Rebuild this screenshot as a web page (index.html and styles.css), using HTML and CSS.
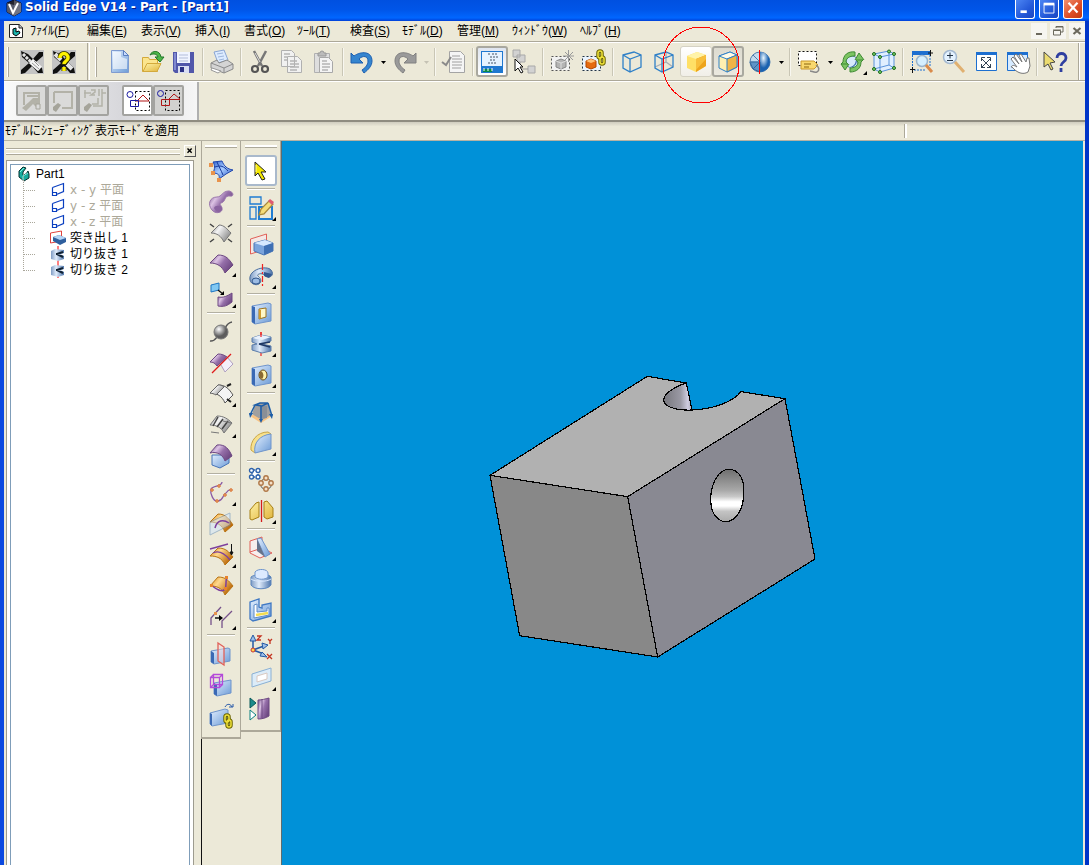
FILE: index.html
```
<!DOCTYPE html>
<html lang="ja">
<head>
<meta charset="utf-8">
<title>Solid Edge V14 - Part - [Part1]</title>
<link rel="stylesheet" href="styles.css">
</head>
<body>
<svg class="defs" aria-hidden="true">
  <defs>
    <linearGradient id="blue" x1="0" y1="0" x2="1" y2="1"><stop offset="0" stop-color="#e4f0ff"/><stop offset="1" stop-color="#6c9bd6"/></linearGradient>
    <linearGradient id="deep" x1="0" y1="0" x2="1" y2="1"><stop offset="0" stop-color="#2f62d0"/><stop offset=".45" stop-color="#a9ccff"/><stop offset="1" stop-color="#1d4fc0"/></linearGradient>
    <linearGradient id="steel" x1="0" y1="0" x2="1" y2="0"><stop offset="0" stop-color="#7f9cc4"/><stop offset=".4" stop-color="#e0ecfb"/><stop offset="1" stop-color="#4f77ad"/></linearGradient>
    <linearGradient id="purple" x1="0" y1="0" x2="1" y2=".6"><stop offset="0" stop-color="#6b4a80"/><stop offset=".35" stop-color="#dcc2e4"/><stop offset=".6" stop-color="#9670aa"/><stop offset="1" stop-color="#6d4882"/></linearGradient>
    <linearGradient id="gold" x1="0" y1="0" x2="1" y2="1"><stop offset="0" stop-color="#fff3a8"/><stop offset="1" stop-color="#e0b43c"/></linearGradient>
    <linearGradient id="orange" x1="0" y1="0" x2="1" y2=".6"><stop offset="0" stop-color="#d98412"/><stop offset=".4" stop-color="#ffd98e"/><stop offset="1" stop-color="#b96200"/></linearGradient>
    <linearGradient id="gray" x1="0" y1="0" x2="1" y2=".6"><stop offset="0" stop-color="#8c8c8c"/><stop offset=".4" stop-color="#f4f4f4"/><stop offset="1" stop-color="#8c8c8c"/></linearGradient>
    <radialGradient id="ball" cx=".35" cy=".3"><stop offset="0" stop-color="#fff"/><stop offset="1" stop-color="#5d5d5d"/></radialGradient>
    <radialGradient id="orb" cx=".35" cy=".3"><stop offset="0" stop-color="#e8f6ff"/><stop offset="1" stop-color="#1a62b0"/></radialGradient>
    <linearGradient id="bore" x1="0" y1="0" x2="0" y2="1"><stop offset="0" stop-color="#6f6f6f"/><stop offset=".4" stop-color="#a8a8a8"/><stop offset=".52" stop-color="#c8c8c8"/><stop offset=".62" stop-color="#fff"/><stop offset=".7" stop-color="#fff"/><stop offset=".8" stop-color="#c4c4c4"/><stop offset="1" stop-color="#aaa"/></linearGradient>
    <linearGradient id="wall" x1="0" y1="0" x2="1" y2="0"><stop offset="0" stop-color="#77777d"/><stop offset=".6" stop-color="#9a99a4"/><stop offset=".85" stop-color="#cfcde0"/><stop offset="1" stop-color="#aaa9b8"/></linearGradient>
  </defs>
</svg>

<div class="window">
  <header class="titlebar">
    <svg class="applogo" viewBox="0 0 16 16"><path d="M8 0l7 3v9l-7 4-7-4V3z" fill="#23232e" stroke="#0a1030"/><path d="M8 0l7 3v9l-7 4z" fill="#555560"/><path d="M1 3l7 2 7-2v9l-7 4-7-4z" fill="#8b93a8" opacity=".5"/><path d="M3 4l4 9 5-10" fill="none" stroke="#fff" stroke-width="2"/></svg>
    <h1>Solid Edge V14 - Part - [Part1]</h1>
    <div class="winbtns">
      <button aria-label="最小化"><svg viewBox="0 0 20 20"><path d="M5 13h7" stroke="#fff" stroke-width="3"/></svg></button>
      <button aria-label="最大化"><svg viewBox="0 0 20 20"><path d="M4.500 5h11v9.500h-11z" fill="none" stroke="#fff"/><path d="M4 4.500h12" stroke="#fff" stroke-width="3"/></svg></button>
      <button class="close" aria-label="閉じる"><svg viewBox="0 0 20 20"><path d="M5 3l10 11M15 3L5 14" stroke="#fff" stroke-width="2.400"/></svg></button>
    </div>
  </header>

  <nav class="menubar">
    <svg class="docicon" viewBox="0 0 14 16"><path d="M.5 1.500h10l3 3v10H.5z" fill="#fff" stroke="#222"/><path d="M10 1v4h4" fill="#bbb" stroke="#222"/><path d="M4 6l3-1v4l3-1 1 2-4 3-3-2z" fill="#1bb5ad" stroke="#000"/></svg>
    <div class="menus">
      <button>ﾌｧｲﾙ(<u>F</u>)</button><button>編集(<u>E</u>)</button><button>表示(<u>V</u>)</button><button>挿入(<u>I</u>)</button><button>書式(<u>O</u>)</button><button>ﾂｰﾙ(<u>T</u>)</button><button>検査(<u>S</u>)</button><button>ﾓﾃﾞﾙ(<u>D</u>)</button><button>管理(<u>M</u>)</button><button>ｳｨﾝﾄﾞｳ(<u>W</u>)</button><button>ﾍﾙﾌﾟ(<u>H</u>)</button>
    </div>
    <div class="docbtns">
      <button aria-label="文書の最小化"><svg viewBox="0 0 16 16"><path d="M5 11h6" stroke="#6b685c" stroke-width="2"/></svg></button>
      <button aria-label="文書を元に戻す"><svg viewBox="0 0 16 16"><path d="M6 5V3.500h7V9h-2M6 4h7M3.500 7.500h7V12h-7zM3 7h8" fill="none" stroke="#6b685c"/></svg></button>
      <button aria-label="文書を閉じる"><svg viewBox="0 0 16 16"><path d="M4.500 5l7 6M11.500 5l-7 6" stroke="#6b685c" stroke-width="2.200"/></svg></button>
    </div>
  </nav>

  <div class="toolrow">
    <div class="tools addins">
      <i class="grip"></i>
      <button aria-label="アドイン"><svg viewBox="0 0 24 24"><path d="M0 0h24v24H0z" fill="#c4c4c4"/><path d="M1 1l7 3 5 5 6-7h4v4l-7 6 6 6 1 5h-5l-6-7-7 7-4 1v-4l8-7-7-6z" fill="#111"/><path d="M3 4l9 9" stroke="#e4e4e4" stroke-width="3" stroke-dasharray="3 1"/><path d="M11 11l9 8" stroke="#f4f4f4" stroke-width="6"/><path d="M12 13l7 6M14 11l5 5" stroke="#999"/></svg></button>
      <button aria-label="アドイン ヘルプ"><svg viewBox="0 0 24 24"><path d="M0 0h24v24H0z" fill="#c4c4c4"/><path d="M1 1l7 3 5 5 6-7h4v4l-7 6 6 6 1 5h-5l-6-7-7 7-4 1v-4l8-7-7-6z" fill="#111"/><path d="M3 4l6 6M15 14l5 5" stroke="#e4e4e4" stroke-width="4"/><path d="M8 8c0-6 8-6 8 0 0 3-4 3-4 7M12 17v4" fill="none" stroke="#333300" stroke-width="5"/><path d="M8 8c0-6 8-6 8 0 0 3-4 3-4 6M12 17v4" fill="none" stroke="#fff200" stroke-width="3.400"/></svg></button>
    </div>
    <div class="tools main">
      <i class="grip"></i>
      <button aria-label="新規"><svg viewBox="0 0 24 24"><path d="M3.500 .5h12l5 5v17h-17z" fill="url(#blue)" stroke="#7f9bd0"/><path d="M5 2h8v5l6 2v10H5z" fill="#fff" opacity=".6"/><path d="M15.500 .5v5h5z" fill="#c9dcff" stroke="#5b7fc0"/></svg></button>
      <button aria-label="開く"><svg viewBox="0 0 24 24"><path d="M2.500 7.500h6l1 2h8v12h-15z" fill="#fbe58e" stroke="#d3a93c"/><path d="M3 21.500l4-8h14l-4 8z" fill="url(#gold)" stroke="#d3a93c"/><path d="M10 5c2-5 10-5 11 2h3l-4 5-5-5h3c-1-3-4-4-8-2z" fill="#4db648" stroke="#22772a"/></svg></button>
      <button aria-label="保存"><svg viewBox="0 0 24 24"><path d="M1 2h21v21H3l-2-2z" fill="#5157aa"/><path d="M2 3h2v17H2z" fill="#8089d0"/><path d="M5 2h13v11H5z" fill="#f0f4ff"/><path d="M7 5h9M7 8h9M7 11h9" stroke="#b3bdd8"/><path d="M6 16h11v7H6z" fill="#d8ddf2"/><path d="M8 17h4v5H8z" fill="#2c3184"/></svg></button>
      <i class="sep"></i>
      <button aria-label="印刷"><svg viewBox="0 0 24 24"><path d="M4 2l10-2 4 10-10 3z" fill="#dcebff" stroke="#8aa6d4"/><path d="M7 4l6-1M8 7l6-1M9 10l5-1" stroke="#9db6dc"/><path d="M1 13l6-3 2 3 8-3 6 4v5l-9 4-13-5z" fill="#d4d4d4" stroke="#8a8a8a"/><path d="M1 13l13 5 9-4M14 18v5" fill="none" stroke="#8a8a8a"/><path d="M2 18l9 3-3 2-7-3z" fill="#fff" stroke="#999"/></svg></button>
      <i class="sep"></i>
      <button aria-label="切り取り"><svg viewBox="0 0 24 24"><path d="M6 1l8 15M18 1l-8 15" stroke="#777" stroke-width="2.500"/><path d="M7 3l5 9" stroke="#ddd"/><circle cx="7" cy="19" r="3" fill="none" stroke="#555" stroke-width="2.200"/><circle cx="17" cy="19" r="3" fill="none" stroke="#555" stroke-width="2.200"/></svg></button>
      <button aria-label="コピー"><svg viewBox="0 0 24 24"><path d="M1.500 .5h10l3 3v13h-13zM7.500 6.500h10l4 4v12h-14z" fill="#f1f1f1" stroke="#b0b0b0"/><path d="M4 4h6M4 7h3M4 10h3M10 11h7M10 14h9M10 17h9M10 20h7" stroke="#b4b4b4" stroke-width="1.500"/></svg></button>
      <button aria-label="貼り付け"><svg viewBox="0 0 24 24"><path d="M2.500 3.500h15v19h-15z" fill="#dedede" stroke="#b0b0b0"/><path d="M6 6V3h2a2 2 0 0 1 4 0h2v3z" fill="#bbb" stroke="#999"/><path d="M7.500 7.500h9l4 4v11h-13z" fill="#f4f4f4" stroke="#a8a8a8"/><path d="M10 11h5M10 14h8M10 17h8M10 20h6" stroke="#b4b4b4" stroke-width="1.500"/></svg></button>
      <i class="sep"></i>
      <button aria-label="元に戻す"><svg viewBox="0 0 24 24"><path d="M1 3l3 3C11 1 22 1 22 11c0 5-4 9-8 12l-2-3c3-2 6-5 6-9 0-5-5-6-9-2l4 4H1z" fill="#3585cf" stroke="#1c5fb0"/></svg></button><button class="drop" aria-label="元に戻す一覧"><svg viewBox="0 0 11 31"><path d="M3 15h5l-2.500 3z"/></svg></button>
      <button aria-label="やり直し"><svg viewBox="0 0 24 24"><path d="M23 3l-3 3C13 1 2 1 2 11c0 5 4 9 8 12l2-3c-3-2-6-5-6-9 0-5 5-6 9-2l-4 4h12z" fill="#9a9a9a" stroke="#808080"/></svg></button><button class="drop off" aria-label="やり直し一覧"><svg viewBox="0 0 11 31"><path d="M3 15h5l-2.500 3z"/></svg></button>
      <i class="sep"></i>
      <button aria-label="プロパティ"><svg viewBox="0 0 24 24"><path d="M7.500 1.500h11l4 4v17h-15z" fill="#f5f5f5" stroke="#a4a4a4"/><path d="M10 6h8M10 9h10M10 12h10M10 15h10M10 18h9" stroke="#bcbcbc" stroke-width="1.500"/><path d="M0 12l4 3 5-8" fill="none" stroke="#8a8a8a" stroke-width="2"/></svg></button>
      <i class="sep"></i>
      <button class="pressed" aria-label="EdgeBar"><svg viewBox="0 0 24 24"><path d="M1 1h22v22H1z" fill="#1f78d0"/><path d="M2 2h20v14H2z" fill="#e6f3ff"/><path d="M8 4h2M12 4h6M10 7h2M13 7h5M10 10h2M13 10h3M8 13h8" stroke="#456" stroke-dasharray="2 1"/><path d="M3 19h9v3H3z" fill="#0a8a4a"/><path d="M4 18v3M8 18v3M12 18v3" stroke="#fff"/></svg></button>
      <button aria-label="選択ツール"><svg viewBox="0 0 24 24"><path d="M1 0h7v7H1zM5 5h8v7H5zM16 16h7v7h-7z" fill="#d2d2d2" stroke="#a8a8a8"/><path d="M8 12v7h8" fill="none" stroke="#999"/><path d="M3 9l8 8H8l3 5-2 1-3-5-3 3z" fill="#fff" stroke="#111"/></svg></button>
      <i class="sep"></i>
      <button aria-label="新規コンポーネント"><svg viewBox="0 0 24 24"><path d="M1.500 6.500h18v14h-18z" fill="#f2f2f2" stroke="#555" stroke-dasharray="2 2"/><path d="M6 11l5-2 5 2v6l-5 2-5-2z" fill="#b4b4b4" stroke="#888"/><path d="M6 11l5 2 5-2M11 13v6" fill="none" stroke="#ddd"/><path d="M18.500 0v12M13 6h11M15 2l8 8M23 2l-8 8" stroke="#999"/></svg></button>
      <button aria-label="リンク"><svg viewBox="0 0 24 24"><path d="M.5 6.500h18v14H.5z" fill="#eaf4ff" stroke="#234" stroke-dasharray="2 2"/><path d="M4 11l5-2 5 2v6l-5 2-5-2z" fill="#e56a10" stroke="#b34700"/><path d="M4 11l5 2 5-2-5-2z" fill="#ffc27a"/><g fill="none" stroke="#6b6400" stroke-width="3.500"><rect x="16" y="1" width="4" height="7" rx="2"/><rect x="18" y="7" width="4" height="7" rx="2"/></g><g fill="none" stroke="#f0e23a" stroke-width="1.500"><rect x="16" y="1" width="4" height="7" rx="2"/><rect x="18" y="7" width="4" height="7" rx="2"/></g></svg></button>
      <i class="sep"></i>
      <button aria-label="ワイヤーフレーム"><svg viewBox="0 0 24 24" fill="none" stroke="#2f80c8" stroke-width="1.300"><path d="M3 5l11-3 7 3v12l-11 5-7-4zM3 5l7 4 11-4M10 9v13"/></svg></button>
      <button aria-label="隠線表示"><svg viewBox="0 0 24 24" fill="none" stroke="#2f80c8" stroke-width="1.300"><path d="M3 17l11-5 7 5M14 12V3" stroke="#a5adb8"/><path d="M3 5l11-3 7 3v12l-11 5-7-4zM3 5l7 4 11-4M10 9v13"/></svg></button>
      <span class="spot"><button class="hover" aria-label="シェーディング"><svg viewBox="0 0 24 24"><path d="M3 6l10-4 9 3v11l-10 6-9-4z" fill="#ffe066"/><path d="M3 6l10-4 9 3-10 4z" fill="#fff3a8"/><path d="M12 9l10-4v11l-10 6z" fill="#eda41c"/><path d="M12 9l10-4v4L12 20z" fill="#f8bf3c"/></svg></button><svg class="ring" viewBox="0 0 78 78"><circle cx="39" cy="39" r="38" fill="none" stroke="#f00"/></svg></span>
      <button class="pressed plain" aria-label="エッジ付きシェーディング"><svg viewBox="0 0 24 24" stroke="#2f80c8"><path d="M3 6l11-4 7 3v12l-10 5-8-4z" fill="#fff0b0"/><path d="M3 6l11-4 7 3-10 4z" fill="#fffbe8"/><path d="M11 9l10-4v12l-10 5z" fill="#f0b547"/></svg></button>
      <button aria-label="ビューの設定"><svg viewBox="0 0 24 24"><circle cx="12" cy="12" r="10" fill="#c4daec" stroke="#4f7dae"/><path d="M12 2a10 10 0 0 1 0 20z" fill="url(#orb)"/><path d="M12 12H2l3 7zM12 12L5 19l7 3z" fill="#5f94c6" stroke="#35689c"/><path d="M12 12L5 5M12 12L2 12" stroke="#4f7dae"/><path d="M11.500 0v24" stroke="#f00"/></svg></button><button class="drop" aria-label="ビュー一覧"><svg viewBox="0 0 11 31"><path d="M3 15h5l-2.500 3z"/></svg></button>
      <i class="sep"></i>
      <button aria-label="名前付きビュー"><svg viewBox="0 0 24 24"><path d="M1.500 1.500h18v14h-18z" fill="#fff" stroke="#111" stroke-dasharray="2 2"/><path d="M4 11h13l4 4-4 4H4z" fill="#f9d86d" stroke="#c9982c"/><path d="M7 14h7M7 17h5" stroke="#8a6410"/><path d="M19 15c3 2 4 5 1 7-3 1-5-1-7-1" fill="none" stroke="#888" stroke-width="1.500"/></svg></button><button class="drop" aria-label="名前付きビュー一覧"><svg viewBox="0 0 11 31"><path d="M3 15h5l-2.500 3z"/></svg></button>
      <button class="fly" aria-label="回転"><svg viewBox="0 0 24 24"><circle cx="12" cy="12" r="6" fill="#d6e9fa" stroke="#5580b0"/><path d="M16 8a6 6 0 0 1-6 9c5-1 6-5 6-9z" fill="#3c6fae"/><path d="M1 14l7 0-2-2c0-4 4-6 8-6l1 0 0-4C8 1 3 5 3 12zM1 14l4 6 4-6" fill="#7cc462" stroke="#3f8a34"/><path d="M23 10l-7 0 2 2c0 4-4 6-8 6v4c7 0 11-4 11-10zM15 10l4-7 5 7" fill="#7cc462" stroke="#3f8a34"/></svg></button>
      <button aria-label="フィット"><svg viewBox="0 0 24 24"><path d="M2 4l15-3 5 3v14l-14 4-6-3z" fill="#e0efff" stroke="#5b93db"/><path d="M2 4l6 3 14-3M8 7v16M17 1v14l5 3M17 15L2 19" fill="none" stroke="#5b93db"/><g fill="#7bd06a" stroke="#1c6a1c"><circle cx="2" cy="4" r="1.500"/><circle cx="17" cy="1.500" r="1.500"/><circle cx="22" cy="4" r="1.500"/><circle cx="8" cy="7" r="1.500"/><circle cx="2" cy="19" r="1.500"/><circle cx="8" cy="22" r="1.500"/><circle cx="22" cy="18" r="1.500"/></g></svg></button>
      <i class="sep"></i>
      <button aria-label="領域ズーム"><svg viewBox="0 0 24 24"><path d="M2 1h18v4H2z" fill="#1d6fd0"/><path d="M2.500 5v15M4 20h12M20 5v12" fill="none" stroke="#1d6fd0" stroke-dasharray="2 1"/><path d="M18 3h5M20.500 0v6M0 19.500h5M2.500 17v6" stroke="#111"/><circle cx="12" cy="11" r="5.500" fill="#d5efff" stroke="#9ab4cc" stroke-width="1.500"/><path d="M16 15l6 7" stroke="#d98b4c" stroke-width="3"/></svg></button>
      <button aria-label="ズーム"><svg viewBox="0 0 24 24"><circle cx="8" cy="7" r="6.500" fill="#e4f2ff" stroke="#a3b8d0" stroke-width="1.500"/><path d="M5 5.500h6M8 2.500v6M5 10.500h6" stroke="#234"/><path d="M13 12l9 10" stroke="#e0b070" stroke-width="3"/></svg></button>
      <button aria-label="全体表示"><svg viewBox="0 0 24 24"><path d="M2.500 2.500h20v18h-20z" fill="#fff" stroke="#1d6fd0"/><path d="M2 2h21v3H2z" fill="#1d6fd0"/><path d="M7 8l10 10M17 8L7 18M7.500 11V7.500H11M13 7.500h3.500V11M7.500 14v3.500H11M13 17.500h3.500V14" fill="none" stroke="#345"/></svg></button>
      <button aria-label="パン"><svg viewBox="0 0 24 24"><path d="M1.500 2.500h20v18h-20z" fill="#d7ebff" stroke="#1d6fd0"/><path d="M1 2h21v3H1z" fill="#1d6fd0"/><path d="M5 17c2-3 4-1 6 0L5 9l2-2 6 7-5-8 2-2 6 8-3-7 2-1 5 8 1-4h2l1 8-2 6c-5 3-11 1-16-5z" fill="#fff" stroke="#777"/></svg></button>
      <i class="sep"></i>
      <button aria-label="ヘルプ"><svg viewBox="0 0 24 24"><path d="M0 2l11 10-5 1 3 6-2 1-3-6-4 3z" fill="#ecdc70" stroke="#444"/><path d="M13 8c0-6 9-6 9 0 0 4-5 4-5 8M17 18v4" fill="none" stroke="#2f3fa0" stroke-width="2.800"/></svg></button>
      <i class="tail"></i>
    </div>
  </div>

  <div class="ribbonrow">
    <div class="ribbon">
      <div class="group">
        <button class="dim" aria-label="平面選択"><svg viewBox="0 0 24 24"><path d="M4 16V4h15v12M7 7h12" fill="none" stroke="#b3b2a8" stroke-width="2"/><path d="M9 13l4-4h7v10h-3l-4-4-7 7-4-3z" fill="#b3b2a8"/><path d="M16 15h4v5h-4z" fill="#dadad9" stroke="#a5a49a"/></svg></button>
        <button class="dim" aria-label="プロファイル"><svg viewBox="0 0 24 24"><path d="M3 3h18v16H11M3 3v11" fill="none" stroke="#b3b2a8" stroke-width="2"/><path d="M2 18l5-4 3 2-5 7-3-2z" fill="#a5a49a"/></svg></button>
        <button class="dim" aria-label="範囲"><svg viewBox="0 0 24 24"><path d="M2 4h7M20 4h4M3 1v8M17 0v7M20 0v17h-9M16 9v6h-6M9 1h4v2L9 6h4" fill="none" stroke="#b3b2a8" stroke-width="1.500"/><path d="M2 18l5-4 3 2-5 7-3-2z" fill="#a5a49a"/></svg></button>
      </div>
      <div class="group">
        <button class="sel" aria-label="側面"><svg viewBox="0 0 24 24" fill="none"><path d="M9.500 2.500h14v19h-14z" stroke="#000" stroke-dasharray="2 2"/><path d="M10 12h13M11 12l6-6 6 6" stroke="#b01414"/><circle cx="4" cy="5.500" r="3" stroke="#1a1aa0"/><path d="M4.500 11.500h8v6h-8z" stroke="#1a1aa0"/></svg></button>
        <button class="alt" aria-label="内外"><svg viewBox="0 0 24 24" fill="none"><path d="M8.500 1.500h14v20h-14z" stroke="#000" stroke-dasharray="2 2"/><path d="M12 10.500h11M12 10l5-5 6 5M4.500 10.500h8v6h-8z" stroke="#b01414"/><circle cx="3.500" cy="4.500" r="3" stroke="#1a1aa0"/></svg></button>
      </div>
    </div>
  </div>

  <div class="prompt"><p>ﾓﾃﾞﾙにｼｪｰﾃﾞｨﾝｸﾞ表示ﾓｰﾄﾞを適用</p><span></span></div>

  <main class="work">
    <aside class="edgebar">
      <div class="edgehead"><i></i><button aria-label="パネルを閉じる"><svg viewBox="0 0 12 12"><path d="M3 3l5 5M8 3L3 8" stroke="#000" stroke-width="1.700"/></svg></button></div>
      <div class="treeframe">
        <div class="tree">
          <div class="root"><svg viewBox="0 0 14 16"><path d="M2 5l4-4 3 1-3 4v3l3-1 2-3 1 3v4l-5 3-5-4z" fill="#18a99c" stroke="#053030"/><path d="M3 6l4-4M6 14v-4l5-3" fill="none" stroke="#7ff0e4"/></svg>Part1</div>
          <ul>
            <li class="plane"><svg viewBox="0 0 16 16"><path d="M2.500 5.500l11-4v8l-7 3M2.500 5.500v8h4v-3h-4" fill="none" stroke="#0a3fc0" stroke-width="1.200"/></svg>x - y 平面</li>
            <li class="plane"><svg viewBox="0 0 16 16"><path d="M2.500 5.500l11-4v8l-7 3M2.500 5.500v8h4v-3h-4" fill="none" stroke="#0a3fc0" stroke-width="1.200"/></svg>y - z 平面</li>
            <li class="plane"><svg viewBox="0 0 16 16"><path d="M2.500 5.500l11-4v8l-7 3M2.500 5.500v8h4v-3h-4" fill="none" stroke="#0a3fc0" stroke-width="1.200"/></svg>x - z 平面</li>
            <li><svg viewBox="0 0 16 16"><path d="M.5 3l11-2v10L.5 13z" fill="#fff" stroke="#e0443e"/><path d="M3 7l6-2 7 3v4l-6 3-7-4z" fill="#2f5f9e"/><path d="M3 7l6-2 7 3-6 2z" fill="#b4d4f5"/></svg>突き出し 1</li>
            <li><svg viewBox="0 0 16 16"><path d="M8 0v16" stroke="#f00"/><path d="M1 5l4-2 9 1v3l-4 1 4 2v3l-6 2-7-2z" fill="url(#steel)"/><path d="M7 8l6-2M7 8l6 3M6 8h3" stroke="#123" stroke-width="2"/></svg>切り抜き 1</li>
            <li><svg viewBox="0 0 16 16"><path d="M8 0v16" stroke="#f00"/><path d="M1 5l4-2 9 1v3l-4 1 4 2v3l-6 2-7-2z" fill="url(#steel)"/><path d="M7 8l6-2M7 8l6 3M6 8h3" stroke="#123" stroke-width="2"/></svg>切り抜き 2</li>
          </ul>
        </div>
      </div>
    </aside>

    <div class="railslot first">
      <div class="rail">
        <i class="grip"></i>
        <button aria-label="曲面 境界"><svg viewBox="0 0 24 24"><path d="M4 3l9-1c2 5 5 8 11 9l-7 4-7 5c1-4-1-6-6-6 2-4 2-8 0-11z" fill="url(#deep)" stroke="#1d44ac"/><path d="M6 8c5-2 9-1 13 4M8 3c2 5 4 8 6 13" fill="none" stroke="#16389a"/><g fill="#e8934c"><path d="M0 4h4v4H0zM2 12h4v4H2zM8 19h4v4H8z"/></g></svg></button>
        <button aria-label="スイープ曲面"><svg viewBox="0 0 24 24"><path d="M3 20c-5-6-2-13 5-13 5 0 5-6 12-6 5 1 5 6 1 5-6-1-4 6-9 7-3 1 2 3 1 7-1 3-7 4-10 0z" fill="url(#purple)" stroke="#9a76ac"/><path d="M5 18c1-3 6-3 8 0 0 4-6 5-8 0z" fill="#8a63a0"/></svg></button>
        <button aria-label="オフセット曲面"><svg viewBox="0 0 24 24"><path d="M2 12l8-8c5 0 8 4 12 8l-7 9C12 15 8 12 2 12z" fill="url(#gray)" stroke="#777"/><path d="M1 3l4 3M23 3l-4 3M1 21l4-3M23 21l-4-3" stroke="#444" stroke-width="1.500"/></svg></button>
        <button class="fly" aria-label="押し出し曲面"><svg viewBox="0 0 24 24"><path d="M1 11l8-8c8 0 11 4 15 10l-8 8C13 14 8 11 1 11z" fill="url(#purple)" stroke="#6d4882"/></svg></button>
        <button class="fly" aria-label="曲面コピー"><svg viewBox="0 0 24 24"><path d="M2 2l8-2v7L2 9z" fill="#81c8f2" stroke="#1d76c4"/><path d="M9 7l5 4" stroke="#111" stroke-width="1.500"/><path d="M15 12V8l-4 4z"/><path d="M9 14c6 1 9-1 14-4v9c-5 4-8 5-14 4z" fill="url(#purple)" stroke="#6d4882"/></svg></button>
        <i class="hr"></i>
        <button aria-label="交差点"><svg viewBox="0 0 24 24"><path d="M1 21c6 1 6-5 11-8s4-10 11-11" fill="none" stroke="#555" stroke-width="1.500"/><circle cx="12" cy="12" r="7" fill="url(#ball)" stroke="#777"/></svg></button>
        <button aria-label="曲面分割"><svg viewBox="0 0 24 24"><path d="M1 11l8-8c4 0 6 1 9 3L8 15c-2-3-4-4-7-4z" fill="url(#purple)" stroke="#6d4882"/><path d="M18 6l6 7-8 8-4-7" fill="#f3effa" stroke="#b0a0c0"/><path d="M3 22L22 3" stroke="#e01a1a" stroke-width="1.200"/></svg></button>
        <button class="fly" aria-label="曲面延長"><svg viewBox="0 0 24 24"><path d="M1 11l8-8c8 0 11 4 15 10l-8 8C13 14 8 11 1 11z" fill="#f4f4f4" stroke="#555"/><path d="M1 11l8-8c2 0 4 0 6 2l-8 8c-2-1-4-2-6-2z" fill="url(#gray)" stroke="#666"/><path d="M18 4l4-2M18 17l4 3" stroke="#222" stroke-width="2"/></svg></button>
        <button class="fly" aria-label="面置換"><svg viewBox="0 0 24 24"><path d="M1 12l7-9c7 0 11 3 15 7l-8 10C12 14 7 12 1 12z" fill="url(#gray)" stroke="#777"/><path d="M9 4l-5 9M14 6l-6 8M19 8l-6 8" stroke="#444" stroke-width="1.500"/><path d="M2 19l8 1M14 8l8 2" stroke="#777"/></svg></button>
        <button aria-label="ソリッド面"><svg viewBox="0 0 24 24"><path d="M3 11h8l9-1v9l-9 5-8-3z" fill="url(#blue)" stroke="#4774b8"/><path d="M1 9l7-8c8-1 12 4 15 11l-7 5C14 11 8 7 1 9z" fill="url(#purple)" stroke="#6d4882"/></svg></button>
        <i class="hr"></i>
        <button class="fly" aria-label="キーポイント曲線"><svg viewBox="0 0 24 24"><path d="M13 1c0 5-9 3-11 7-1 4 2 13 7 12 6-1 4-6 8-8 2-3 4-4 6-3" fill="none" stroke="#8a5aa5" stroke-width="1.300"/><g fill="#f0a070" stroke="#d87838"><circle cx="10" cy="5" r="1.300"/><circle cx="3" cy="9" r="1.300"/><circle cx="8" cy="20" r="1.300"/><circle cx="16" cy="14" r="1.300"/><circle cx="22" cy="9" r="1.300"/></g></svg></button>
        <button aria-label="曲面交差"><svg viewBox="0 0 24 24"><path d="M1 10l8-8c8 0 11 5 15 11l-8 7C13 13 8 10 1 10z" fill="url(#orange)" stroke="#b87414"/><path d="M1 10l20-9v12L1 23z" fill="#cfe6ff" opacity=".5" stroke="#5b87b8"/><path d="M6 16c2-8 8-9 14-5" fill="none" stroke="#7d3f9c" stroke-width="1.500"/></svg></button>
        <button class="fly" aria-label="投影曲線"><svg viewBox="0 0 24 24"><path d="M1 13l8-8c8 0 11 4 15 9l-8 8C13 15 8 13 1 13z" fill="url(#orange)" stroke="#b87414"/><path d="M1 6l18-5M4 10c6-3 12 1 17 7" fill="none" stroke="#7d3f9c" stroke-width="1.300"/><path d="M22.500 1v9M21 9l1.500 3L24 9z" stroke="#111" fill="#111"/></svg></button>
        <button aria-label="曲面上の曲線"><svg viewBox="0 0 24 24"><path d="M1 12l8-9c8 0 11 4 15 9l-8 9C13 14 8 12 1 12z" fill="url(#orange)" stroke="#b87414"/><path d="M2 11c5 4 11 8 14 4 2-3 0-9 2-11" fill="none" stroke="#7d3f9c" stroke-width="1.500"/><path d="M16 2h3v3h-3zM15 13h3v3h-3zM1 10h3v3H1z" fill="#e8832c"/></svg></button>
        <button class="fly" aria-label="曲線オフセット"><svg viewBox="0 0 24 24"><path d="M2 20v-7L12 2M13 23v-7L23 6" fill="none" stroke="#76518a" stroke-width="1.300"/><path d="M6 13h6" stroke="#111" stroke-width="1.500"/><path d="M10 10l4 3-4 3z"/><path d="M5 7h3v3H5z" fill="#e8934c"/></svg></button>
        <i class="hr"></i>
        <button aria-label="面で分割"><svg viewBox="0 0 24 24"><path d="M2 9l17-3 2 1v12L5 22l-3-2z" fill="url(#blue)" stroke="#6f95cc"/><path d="M2 9l3 2v11l-3-2z" fill="#3a69b4"/><path d="M9 1l6 4v18l-6-4z" fill="#f5dede" fill-opacity=".5" stroke="#e06058" stroke-width="1.300"/></svg></button>
        <button aria-label="ブール演算"><svg viewBox="0 0 24 24"><path d="M5 10l17-3v13L8 23l-3-2z" fill="url(#blue)" stroke="#6f95cc"/><path d="M5 10l3 2v11l-3-2z" fill="#3a69b4"/><path d="M1.500 4.500h9v10h-9zM4.500 1.500h9v10h-9zM1.500 4.500l3-3M10.500 4.500l3-3M10.500 14.500l3-3M1.500 14.500l3-3" fill="none" stroke="#b44ad8" stroke-width="1.300"/></svg></button>
        <button aria-label="パーツコピー"><svg viewBox="0 0 24 24"><path d="M1 9l15-4 3 1v13L3 22l-2-2z" fill="url(#blue)" stroke="#6f95cc"/><path d="M1 9l2 1v12l-2-2z" fill="#3a69b4"/><path d="M16 3c2-4 6-3 7 0M20 3h4V0" fill="none" stroke="#2457a8"/><g fill="none" stroke="#6b6400" stroke-width="3.500"><rect x="16" y="11" width="4" height="7" rx="2"/><rect x="18" y="16" width="4" height="7" rx="2"/></g><g fill="none" stroke="#f0e23a" stroke-width="1.500"><rect x="16" y="11" width="4" height="7" rx="2"/><rect x="18" y="16" width="4" height="7" rx="2"/></g></svg></button>
      </div>
    </div>

    <div class="railslot second">
      <div class="rail">
        <i class="grip"></i>
        <button class="chosen" aria-label="選択"><svg viewBox="0 0 24 24"><path d="M6 3l11 10h-5l4 7-3 1-4-7-3 3z" fill="#f4e800" stroke="#222"/><path d="M7 6v7" stroke="#fff9a0"/></svg></button>
        <i class="hr"></i>
        <button class="fly" aria-label="スケッチ"><svg viewBox="0 0 24 24" fill="none" stroke="#1f7cd2" stroke-width="1.300"><path d="M1 1h11v7H1zM1 11h6v12H1z"/><path d="M10 11h13v12H10z" stroke-width="2"/><path d="M10 19l2-6L20 5l4 3-9 10z" fill="#f5dc79" stroke="#a8893c"/><path d="M19 5l2-2 4 3-2 3z" fill="#e05a72" stroke="none"/></svg></button>
        <i class="hr"></i>
        <button aria-label="突き出し"><svg viewBox="0 0 24 24"><path d="M1.500 6l16-5v15l-16 5z" fill="#f5e8e4" stroke="#e06058"/><path d="M5 10l11-3 8 3v8l-9 4-10-4z" fill="#7ba4dc" stroke="#4a75b4"/><path d="M5 10l11-3 8 3-9 3z" fill="#d5e8ff"/><path d="M15 13l9-3v8l-9 4z" fill="#3f70b4"/></svg></button>
        <button class="fly" aria-label="回転突き出し"><svg viewBox="0 0 24 24"><path d="M1 16C-1 5 18 1 22 6c4 5-1 9-6 6-2-4-9-2-7 0s4 4 2 7-9 2-10-3z" fill="url(#steel)" stroke="#4a6c9c"/><ellipse cx="7" cy="17" rx="4" ry="3" fill="#9cbce4" stroke="#31578c"/><path d="M15 8l8 2-3 4-5-2z" fill="#2f568f"/><path d="M13.500 0v24" stroke="#e22" stroke-width="1.200" stroke-dasharray="6 2 2 2"/></svg></button>
        <i class="hr"></i>
        <button aria-label="切り抜き"><svg viewBox="0 0 24 24"><path d="M3 5l16-3 3 1v17L6 23l-3-2z" fill="url(#blue)" stroke="#6f95cc"/><path d="M3 5l3 1v17l-3-2z" fill="#3a69b4"/><path d="M10 8l7-1v9l-7 2z" fill="#fff8c8" stroke="#9c7420"/><path d="M10 8l2 1v8l-2 1z" fill="#d09b2e"/></svg></button>
        <button class="fly" aria-label="回転切り抜き"><svg viewBox="0 0 24 24"><path d="M12 0v24" stroke="#e22" stroke-width="1.200"/><path d="M3 6l9-3 10 2v4l-9 3 9 2v5l-9 2-10-3v-5l5-1-5-2z" fill="url(#steel)" stroke="#5c7dab"/><path d="M3 6l9-3 10 2-9 3z" fill="#e8f1fc"/><path d="M10 12l11-2M10 12l11 3" stroke="#1f3864" stroke-width="1.500"/><path d="M12 0v5" stroke="#e22" stroke-width="1.200"/></svg></button>
        <button class="fly" aria-label="穴"><svg viewBox="0 0 24 24"><path d="M3 5l16-3 3 1v17L6 23l-3-2z" fill="url(#blue)" stroke="#6f95cc"/><path d="M3 5l3 1v17l-3-2z" fill="#3a69b4"/><ellipse cx="14" cy="12" rx="4" ry="5" fill="#fff3a8" stroke="#634712"/><path d="M12 8c-3 3-2 7 1 8 2-2 2-6-1-8z" fill="#8a6a30"/></svg></button>
        <i class="hr"></i>
        <button aria-label="抜き勾配"><svg viewBox="0 0 24 24"><path d="M1 16l10-4 12 4-11 7z" fill="#f7c384"/><path d="M6 5l5-2h8l3 12-9 5-10-6z" fill="#a0a0a0"/><path d="M11 6h7v12l-7 1z" fill="#8a8f96"/><path d="M6 5l5-2h8l-6 3zM6 5L1 15M19 3l4 13M12 6v15" fill="none" stroke="#1d5ea8" stroke-width="1.500"/><path d="M0 13h4l-3 5zM20 14h4l-1 5zM10 19h4l-2 4z" fill="#1d5ea8"/></svg></button>
        <button class="fly" aria-label="ラウンド"><svg viewBox="0 0 24 24"><path d="M2 19C1 10 8 1 19 1l3 2L6 22z" fill="#f7e08c" stroke="#c9a544"/><path d="M6 22C4 12 11 4 22 3v15z" fill="url(#blue)" stroke="#6f95cc"/></svg></button>
        <i class="hr"></i>
        <button aria-label="パターン"><svg viewBox="0 0 24 24" fill="#fff" stroke="#2e62ac" stroke-width="1.400"><path d="M3 2h6v7H3z" stroke-dasharray="1 1"/><circle cx="2.500" cy="2.500" r="2"/><circle cx="9" cy="2.500" r="2"/><circle cx="2.500" cy="9" r="2"/><circle cx="9" cy="9" r="2"/><g stroke="#b07848" fill="#f4e0c8"><circle cx="17" cy="16" r="5.500" fill="none" stroke="#555" stroke-width="1"/><circle cx="17" cy="10" r="2.200"/><circle cx="22" cy="15" r="2.200"/><circle cx="17" cy="21" r="2.200"/><circle cx="12" cy="15" r="2.200"/></g></svg></button>
        <button class="fly" aria-label="ミラー"><svg viewBox="0 0 24 24"><path d="M1 11l6-7 3-1v15l-7 3-2-1zM15 3l3-1 6 7v9l-6 2-3-2z" fill="url(#gold)" stroke="#a78016"/><path d="M12.500 1v22" stroke="#d61c1c" stroke-width="1.300"/></svg></button>
        <i class="hr"></i>
        <button class="fly" aria-label="リブ"><svg viewBox="0 0 24 24"><path d="M1 5l12-4v11l10 5-12 5-10-5zM1 16l12-4" fill="#f7eeee" stroke="#e06058"/><path d="M8 3l4-1 9 16-5 3z" fill="url(#blue)" stroke="#6f95cc"/><path d="M8 3v12l8 6z" fill="#66738c"/></svg></button>
        <button aria-label="薄板化"><svg viewBox="0 0 24 24"><path d="M2 10c3-3 18-4 20 0v8c-3 5-17 5-20 0z" fill="url(#steel)" stroke="#5f88c0"/><path d="M6 5c3-4 13-3 13 1v4c-3 3-10 3-13 0z" fill="#dceaff" stroke="#6f95cc"/><path d="M2 12c4 3 16 3 20 0" fill="none" stroke="#d8e8ff"/></svg></button>
        <button class="fly" aria-label="リップ"><svg viewBox="0 0 24 24"><path d="M1 4l9-3v8l3 1V7l9-2v13L4 23l-3-2z" fill="url(#blue)" stroke="#3f78c4" stroke-width="1.300"/><path d="M5 7l3-1v8l10-1v-3h2v7L5 20z" fill="#fff" stroke="#5f8cc8"/><path d="M7 17l12-2" stroke="#f3dc50" stroke-width="2.500"/></svg></button>
        <i class="hr"></i>
        <button aria-label="座標系"><svg viewBox="0 0 24 24"><path d="M4 15V3M4 15l11-4M4 15l11 4" stroke="#2359a5" stroke-width="1.500"/><path d="M1 6l3-6 3 6zM13 8l6 2-5 4zM13 17l5 5-7-1z" fill="#9dbfe8" stroke="#2359a5"/><circle cx="4" cy="15" r="2" fill="#ffd84a" stroke="#c33"/><path d="M8 1h4L8 5h4M19 4l2 2 2-2M21 6v3M18 19l5 5M23 19l-5 5" fill="none" stroke="#c43522" stroke-width="1.300"/></svg></button>
        <button class="fly" aria-label="参照平面"><svg viewBox="0 0 24 24"><path d="M3 8l19-6v13L3 21z" fill="#dcecf8" stroke="#8ab0d4"/><path d="M8 10l10-3v6L8 16z" fill="#fff" stroke="#d8c8c0"/></svg></button>
        <button aria-label="ファミリ"><svg viewBox="0 0 24 24"><path d="M1 1l6 5-6 5z" fill="#1d8b8b" stroke="#0a5a5a"/><path d="M1 13l6 5-6 5z" fill="#fff" stroke="#0a8080"/><path d="M9 3c4 0 7-1 11-2v18c-3 2-7 3-11 3z" fill="url(#purple)" stroke="#6d4882"/><path d="M13 2v19" stroke="#6d4882"/></svg></button>
      </div>
    </div>

    <section class="viewport" aria-label="モデルビュー">
      <svg class="model" viewBox="0 0 1050 930" shape-rendering="crispEdges" stroke="#000" stroke-width="3.500" stroke-linejoin="round">
        <path d="M619 69C560 88 545 115 553 128C565 145 600 152 636 150Z" fill="url(#wall)"/>
        <path d="M30 346L502 49L619 69C560 88 545 115 553 128C565 145 600 152 636 150C700 148 760 125 783 95L915 116L443 410Z" fill="#b1b1b1"/>
        <path d="M30 346L443 410L533 891L119 827Z" fill="#888"/>
        <path d="M443 410L915 116L1005 597L533 891Z" fill="#898992"/>
        <path d="M748 328C772 328 791 352 791 385V410C788 452 766 485 736 485C709 483 692 455 692 420C692 370 715 328 748 328Z" fill="url(#bore)"/>
      </svg>
    </section>
  </main>
</div>
</body>
</html>
```
FILE: styles.css
```
:root {
  --face: #ece9d8;
  --shade: #aca899;
  --ui: "Liberation Sans", "Noto Sans CJK JP", sans-serif;
}
* { box-sizing: border-box; }
body { margin: 0; font: 12px/16px var(--ui); color: #000; overflow: hidden; }
button { font: inherit; color: inherit; padding: 0; margin: 0; border: 0; background: none; display: block; flex: none; }
svg { display: block; overflow: visible; }
.defs { position: absolute; width: 0; height: 0; }

.window {
  height: 100vh;
  display: flex;
  flex-direction: column;
  background: var(--face);
  border-left: 4px solid #0b49e0;
  border-right: 4px solid #0035c8;
}

/* title bar */
.titlebar {
  flex: none;
  height: 21px;
  margin: 0 -4px;
  padding: 0 6px;
  display: flex;
  align-items: flex-start;
  background: linear-gradient(#0050e0, #0055e8 45%, #0066ff 85%, #0040d8);
}
.applogo { width: 16px; height: 16px; }
.titlebar h1 {
  flex: 1;
  margin: 0 0 0 3px;
  font: bold 12px/15px "DejaVu Sans", sans-serif;
  color: #fff;
  text-shadow: 1px 1px #0a1883;
}
.winbtns { display: flex; gap: 4px; }
.winbtns button {
  width: 20px;
  height: 19px;
  border: 1px solid #fff;
  border-top: 0;
  border-radius: 0 0 3px 3px;
  background: linear-gradient(135deg, #4d86f4, #2358d8 60%, #1a46c0);
}
.winbtns .close { background: linear-gradient(135deg, #f09070, #dc4b24 60%, #c03a12); }
.winbtns svg { width: 18px; height: 18px; }

/* menu bar */
.menubar {
  flex: none;
  height: 22px;
  display: flex;
  align-items: center;
  padding: 0 0 2px 5px;
  border-bottom: 1px solid #fff;
  box-shadow: inset 0 -1px var(--shade);
}
.docicon { width: 14px; height: 16px; margin-right: 7px; }
.menus {
  flex: 1;
  display: grid;
  grid-template-columns: 57px 54px 54px 49px 53px 53px 52px 55px 55px 68px auto;
  justify-content: start;
}
.menus button { text-align: left; white-space: nowrap; line-height: 18px; }
.docbtns { display: flex; gap: 3px; }
.docbtns button { width: 16px; height: 16px; background: #f6f5f0; }

/* tool buttons */
.toolrow {
  flex: none;
  height: 39px;
  display: flex;
  border-bottom: 1px solid #fff;
  box-shadow: inset 0 -1px var(--shade);
}
.tools { display: flex; align-items: center; height: 37px; }
.tools button { position: relative; width: 32px; height: 31px; padding: 3px 4px; border-radius: 3px; }
.tools svg { width: 24px; height: 24px; }
.tools .grip { width: 2px; height: 30px; background: #fff; border-right: 1px solid var(--shade); }
.addins { width: 84px; padding-left: 3px; border-right: 1px solid var(--shade); }
.addins .grip { margin-right: 7px; }
.main { flex: 1; padding-left: 5px; border-left: 1px solid #fff; margin-left: 1px; }
.main .grip { margin-right: 7px; }
.sep { flex: none; width: 2px; height: 28px; margin: 0 2px; background: linear-gradient(90deg, #c9c6b5 50%, #f8f7f0 50%); }
.tools .drop { width: 11px; padding: 0; }
.tools .drop svg { width: 11px; height: 31px; }
.off { fill: #c5c2b4; }
.tools .pressed { border: 2px solid #a9a89f; padding: 2px; background: linear-gradient(#dfe5ef, #fff); }
.tools .plain { background: linear-gradient(#dddbd0, #ebe9df); }
.tools .hover { border: 1px solid #d5d2c4; padding: 2px 3px; background: linear-gradient(#fff, #f1efe8); }
.spot { position: relative; }
.ring { position: absolute; z-index: 2; left: -18px; top: -20px; pointer-events: none; shape-rendering: crispEdges; }
.tools .ring { width: 78px; height: 78px; }
.tail { margin-left: auto; margin-right: 5px; align-self: stretch; width: 2px; border-left: 1px solid var(--shade); background: #fff; }
.fly { position: relative; }
.fly::after {
  content: "";
  position: absolute;
  right: 1px;
  bottom: 2px;
  border: 2px solid transparent;
  border-right-color: #000;
  border-bottom-color: #000;
}

/* ribbon */
.ribbonrow { flex: none; height: 38px; }
.ribbon {
  width: 195px;
  height: 38px;
  padding: 3px 12px;
  display: flex;
  gap: 13px;
  border-right: 2px solid #b0b0b0;
  background: linear-gradient(90deg, #fafafa, #d8d8dc 60%, #f6f6f6);
}
.group { display: flex; }
.group button { width: 31px; height: 31px; padding: 2px; border: 2px solid #a3a3a0; border-radius: 2px; }
.group svg { width: 24px; height: 24px; }
.group .dim { background: #dadad9; }
.group .sel { background: #fff; }
.group .alt { background: #d2d2d0; }

/* prompt line */
.prompt {
  flex: none;
  height: 21px;
  display: flex;
  align-items: center;
  border-top: 2px solid #8f8c80;
  border-bottom: 1px solid #b5b2a4;
  background: linear-gradient(#cfccbf, #ece9d8 25%);
}
.prompt p { flex: 1; margin: 0; padding-left: 1px; }
.prompt span { width: 180px; height: 14px; border-left: 2px solid #fff; box-shadow: -1px 0 var(--shade); }

/* workspace */
.work { flex: 1; min-height: 0; display: flex; border-right: 2px solid var(--face); }
.edgebar { width: 197px; flex: none; display: flex; flex-direction: column; }
.edgehead { display: flex; align-items: center; gap: 4px; padding: 4px 5px 3px 2px; }
.edgehead i { flex: 1; height: 7px; border: solid var(--shade); border-width: 1px 0; box-shadow: inset 0 1px #fff, inset 0 -1px #fff; }
.edgehead button { width: 12px; height: 12px; background: var(--face); border: 1px solid #fff; border-right-color: #555; border-bottom-color: #555; }
.treeframe { flex: 1; margin: 0 7px 0 2px; padding: 3px 3px 0; border: 1px solid #9d9b8f; border-bottom: 0; background: #fff; }
.tree { height: 100%; border: 1px solid #7f9db9; border-bottom: 0; background: #fff; padding: 1px 0 0 6px; }
.root { display: flex; align-items: center; gap: 5px; height: 16px; }
.root svg { width: 14px; height: 16px; }
.tree ul { margin: 0 0 0 6px; padding: 0; list-style: none; }
.tree li { position: relative; display: flex; align-items: center; gap: 4px; height: 16px; padding-left: 27px; white-space: pre; }
.tree li::before { content: ""; position: absolute; left: 0; top: -8px; width: 11px; height: 16px; border: dotted #a9a69a; border-width: 0 0 1px 1px; }
.tree li svg { width: 16px; height: 16px; }
.tree .plane { color: var(--shade); font-family: "DejaVu Sans", "Noto Sans CJK JP", sans-serif; }

.railslot { width: 40px; flex: none; }
.first { border-left: 1px solid #111; }
.rail {
  display: flex;
  flex-direction: column;
  align-items: center;
  padding: 4px 0 6px;
  border-right: 1px solid var(--shade);
  border-bottom: 2px solid var(--shade);
  background: var(--face);
}
.first .rail { margin-left: -1px; border-left: 1px solid var(--shade); }
.rail .grip { width: 32px; height: 3px; margin-bottom: 7px; background: #fff; border-bottom: 1px solid var(--shade); }
.rail button { width: 32px; height: 31px; padding: 3px 4px; }
.rail svg { width: 24px; height: 24px; }
.rail .chosen { border: 2px solid #a9b9cc; border-radius: 3px; padding: 2px; background: #fff; }
.hr { width: 28px; height: 2px; margin: 2px 0; background: #b3b0a2; border-bottom: 1px solid #fff; }

.viewport { flex: 1; position: relative; overflow: hidden; background: #0091d8; border-left: 1px solid #5d6c70; }
.model { position: absolute; left: 198px; top: 219px; width: 350px; height: 310px; }
```
